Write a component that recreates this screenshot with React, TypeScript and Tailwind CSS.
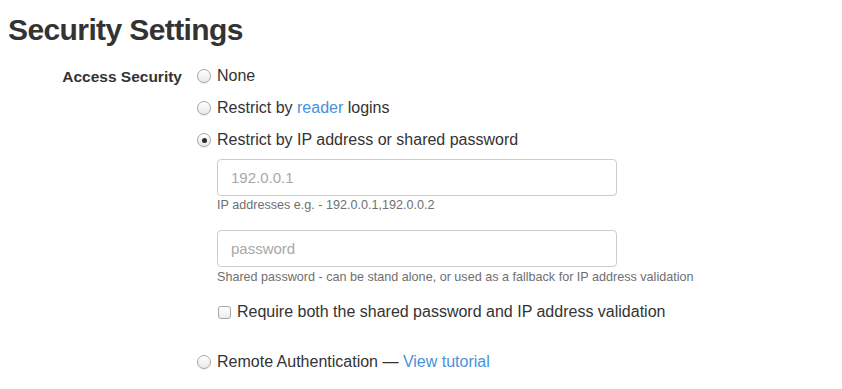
import React from 'react';

const Radio = ({ checked = false }: { checked?: boolean }) => (
  <span className="inline-flex h-[14px] w-[14px] shrink-0 items-center justify-center rounded-full border border-[#a6a6a6] bg-gradient-to-b from-white to-[#e9e9e9] shadow-[0_1px_1px_rgba(0,0,0,0.08)]">
    {checked && <span className="h-[5px] w-[5px] rounded-full bg-[#2b2b2b]" />}
  </span>
);

const Checkbox = () => (
  <span className="inline-block h-[13px] w-[13px] shrink-0 rounded-[3px] border border-[#a6a6a6] bg-gradient-to-b from-white to-[#ececec]" />
);

const App = () => {
  return (
    <div className="min-h-screen bg-white pl-2 pt-[14px] font-['Liberation_Sans',Arial,sans-serif] text-[#333]">
      <h1 className="text-[30px] font-bold leading-[32px] tracking-[-0.6px]">Security Settings</h1>

      <div className="mt-[20px] flex">
        {/* Label column */}
        <div className="w-[174px] pt-[1px] text-right text-[15.5px] font-bold leading-[20px]">Access Security</div>

        {/* Options */}
        <div className="ml-[15px] flex flex-col text-[16px] leading-[20px]">
          <label className="flex items-center gap-[6px]">
            <Radio />
            <span>None</span>
          </label>

          <label className="mt-[12px] flex items-center gap-[6px]">
            <Radio />
            <span>
              Restrict by <a className="text-[#4a90dd]">reader</a> logins
            </span>
          </label>

          <label className="mt-[12px] flex items-center gap-[6px]">
            <Radio checked />
            <span>Restrict by IP address or shared password</span>
          </label>

          <div className="ml-[20px] mt-[9px] flex flex-col">
            <input
              className="h-[37px] w-[400px] rounded-[4px] border border-[#cccccc] px-[13px] text-[15px] outline-none placeholder:text-[#a8a8a8]"
              placeholder="192.0.0.1"
            />
            <p className="text-[12.6px] leading-[18px] text-[#6f6f6f]">IP addresses e.g. - 192.0.0.1,192.0.0.2</p>

            <input
              className="mt-[16px] h-[37px] w-[400px] rounded-[4px] border border-[#cccccc] px-[13px] text-[15px] outline-none placeholder:text-[#a8a8a8]"
              placeholder="password"
            />
            <p className="mt-[1px] text-[12.6px] leading-[18px] text-[#6f6f6f]">
              Shared password - can be stand alone, or used as a fallback for IP address validation
            </p>

            <label className="mt-[16px] flex items-center gap-[6px] pl-[1px]">
              <Checkbox />
              <span>Require both the shared password and IP address validation</span>
            </label>
          </div>

          <label className="mt-[30px] flex items-center gap-[6px]">
            <Radio />
            <span>
              Remote Authentication — <a className="text-[#4a90dd]">View tutorial</a>
            </span>
          </label>
        </div>
      </div>
    </div>
  );
};

export default App;
